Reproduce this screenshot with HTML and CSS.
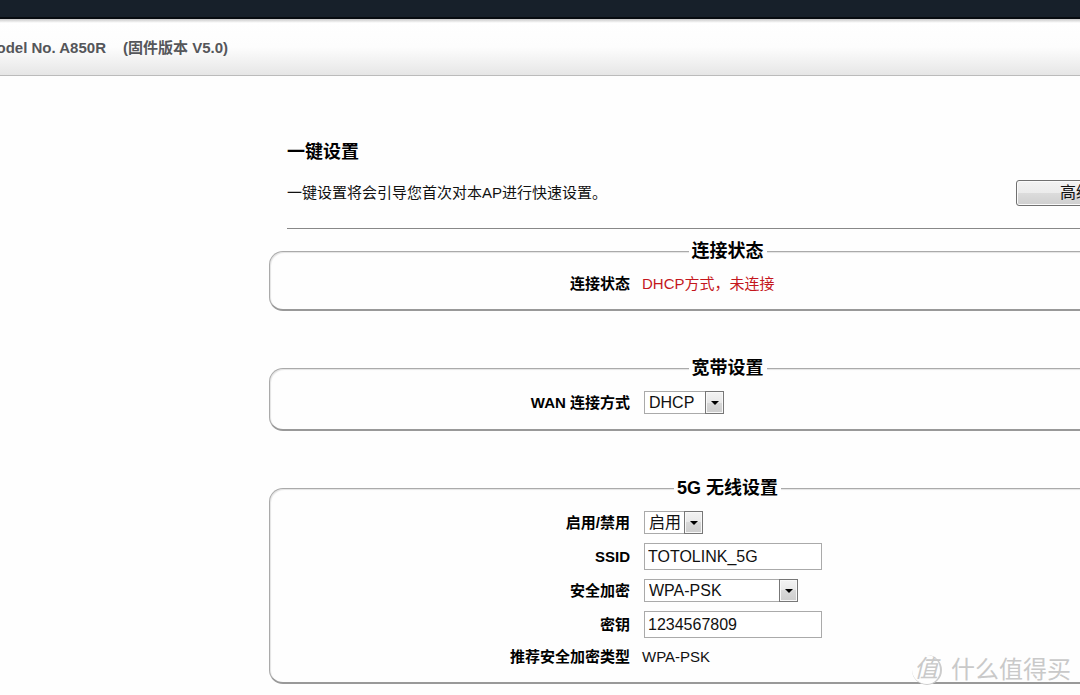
FILE: index.html
```html
<!DOCTYPE html>
<html lang="zh-CN">
<head>
<meta charset="utf-8">
<title>一键设置</title>
<link rel="stylesheet" href="styles.css">
</head>
<body>
<div class="topbar"></div>
<header class="header">
  <span class="model">Model No. A850R</span>
  <span>(固件版本 V5.0)</span>
</header>
<main class="main">
  <section class="intro">
    <h1 class="title">一键设置</h1>
    <div class="intro-row">
      <p class="desc">一键设置将会引导您首次对本AP进行快速设置。</p>
      <button class="advanced" type="button">高级设置</button>
    </div>
  </section>
  <form class="form">
    <fieldset class="panel">
      <legend class="legend">连接状态</legend>
      <div class="row">
        <span class="label">连接状态</span>
        <span class="status">DHCP方式，未连接</span>
      </div>
    </fieldset>
    <fieldset class="panel">
      <legend class="legend">宽带设置</legend>
      <div class="row">
        <label class="label" for="wan">WAN 连接方式</label>
        <span class="picker"><select class="select" id="wan"><option>DHCP</option></select></span>
      </div>
    </fieldset>
    <fieldset class="panel">
      <legend class="legend">5G 无线设置</legend>
      <div class="row">
        <label class="label" for="enable">启用/禁用</label>
        <span class="picker picker-short"><select class="select" id="enable"><option>启用</option></select></span>
      </div>
      <div class="row">
        <label class="label" for="ssid">SSID</label>
        <input class="input" id="ssid" type="text" value="TOTOLINK_5G">
      </div>
      <div class="row">
        <label class="label" for="security">安全加密</label>
        <span class="picker picker-long"><select class="select" id="security"><option>WPA-PSK</option></select></span>
      </div>
      <div class="row">
        <label class="label" for="key">密钥</label>
        <input class="input" id="key" type="text" value="1234567809">
      </div>
      <div class="row">
        <span class="label">推荐安全加密类型</span>
        <span>WPA-PSK</span>
      </div>
    </fieldset>
  </form>
</main>
<div class="watermark"><span class="seal">值</span><span>什么值得买</span></div>
</body>
</html>
```
FILE: styles.css
```css
*, *::before, *::after { box-sizing: border-box; }

body {
  margin: 0;
  overflow: hidden;
  background: #fefefe;
  color: #111;
  font: 15px/20px "Liberation Sans", "Noto Sans CJK SC", sans-serif;
}

.topbar {
  height: 19px;
  background: #17202a;
  border-bottom: 2px solid #070b10;
}

.header {
  display: flex;
  align-items: center;
  gap: 17px;
  height: 57px;
  border-bottom: 1px solid #bbb;
  padding-top: 2px;
  background: linear-gradient(#c8c8c8, #fff 4px, #fdfdfd 50%, #e6e6e6);
  color: #55565a;
  font-weight: bold;
  white-space: nowrap;
}

.model { margin-left: -16px; }

.main {
  margin-left: calc(25% - 1px);
  margin-right: -106px;
  padding-top: 64px;
}

.intro {
  margin: 0 18px;
  border-bottom: 1px solid #888;
  padding-bottom: 22px;
}

.title {
  margin: 0;
  font-size: 18px;
  line-height: 24px;
  color: #000;
}

.intro-row {
  display: flex;
  align-items: center;
  justify-content: space-between;
  margin-top: 16px;
}

.desc { margin: 0; }

.advanced {
  width: 152px;
  height: 26px;
  border: 1px solid #707070;
  border-radius: 3px;
  padding: 0;
  background: linear-gradient(#f2f2f2, #ebebeb 50%, #dcdcdc 50%, #cfcfcf);
  box-shadow: inset 0 0 0 1px #fafafa;
  color: #111;
  font: inherit;
  font-size: 16px;
}

.form { padding-top: 9px; }

.panel {
  display: block;
  min-width: 0;
  margin: 0 0 44px;
  border: 1px solid #aaa;
  border-bottom: 2px solid #999;
  border-radius: 14px;
  padding: 10px 0 15px;
  box-shadow: inset 1px 1px 1px #e4e4e4;
}

.legend {
  margin: 0 auto;
  padding: 0 3px;
  background: #fefefe;
  color: #000;
  font-size: 18px;
  font-weight: bold;
  line-height: 26px;
}

.row {
  display: grid;
  grid-template-columns: 360px 1fr;
  column-gap: 12px;
  align-items: center;
}

.row + .row { margin-top: 9px; }

.label {
  color: #000;
  font-weight: bold;
  text-align: right;
}

.status { color: #c4161c; }

.picker {
  position: relative;
  width: 80px;
  height: 23px;
  margin-left: 2px;
}

.picker-short { width: 59px; }
.picker-long { width: 154px; }

.select {
  display: block;
  appearance: none;
  width: 100%;
  height: 100%;
  border: 1px solid #aaa;
  border-radius: 0;
  padding: 0 0 0 4px;
  background: #fff;
  color: #111;
  font: inherit;
  font-size: 16px;
}

.picker::before {
  content: "";
  position: absolute;
  top: 0;
  right: 0;
  width: 19px;
  height: 23px;
  border: 1px solid #777;
  background: linear-gradient(#f3f3f3, #e8e8e8 50%, #d8d8d8 50%, #cdcdcd);
  box-shadow: inset 0 0 0 1px #f8f8f8;
  pointer-events: none;
}

.picker::after {
  content: "";
  position: absolute;
  top: 10px;
  right: 5px;
  border: 4px solid transparent;
  border-top-color: #000;
  border-bottom: 0;
  pointer-events: none;
}

.input {
  width: 178px;
  height: 27px;
  margin-left: 2px;
  border: 1px solid #aaa;
  padding: 0 3px;
  background: #fff;
  color: #111;
  font: inherit;
  font-size: 16px;
}

.watermark {
  position: absolute;
  right: 9px;
  bottom: 9px;
  display: flex;
  align-items: center;
  gap: 9px;
  color: #c9c9c9;
  font-size: 24px;
  line-height: 32px;
}

.seal {
  width: 30px;
  height: 30px;
  border-right: 2px solid #ccc;
  border-bottom: 1px solid #ccc;
  border-radius: 50%;
  background: #fefefe;
  line-height: 28px;
  text-align: center;
  font-style: italic;
}
```
